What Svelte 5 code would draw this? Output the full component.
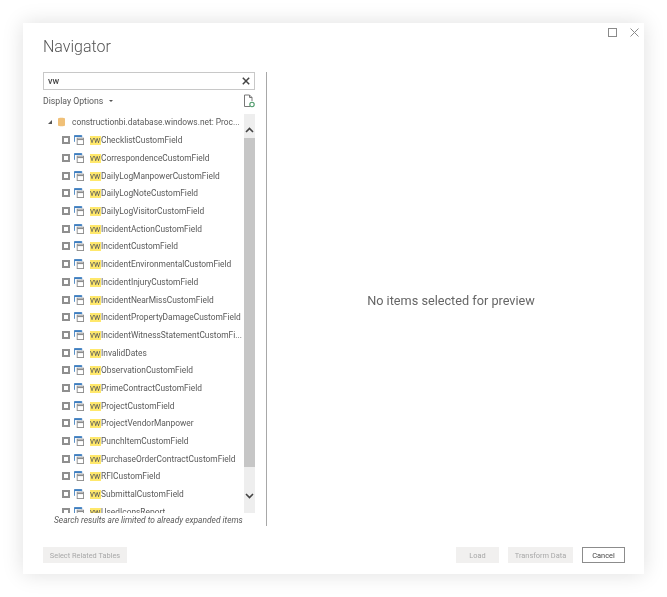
<script lang="ts">
  const tables = [
    'ChecklistCustomField',
    'CorrespondenceCustomField',
    'DailyLogManpowerCustomField',
    'DailyLogNoteCustomField',
    'DailyLogVisitorCustomField',
    'IncidentActionCustomField',
    'IncidentCustomField',
    'IncidentEnvironmentalCustomField',
    'IncidentInjuryCustomField',
    'IncidentNearMissCustomField',
    'IncidentPropertyDamageCustomField',
    'IncidentWitnessStatementCustomFi...',
    'InvalidDates',
    'ObservationCustomField',
    'PrimeContractCustomField',
    'ProjectCustomField',
    'ProjectVendorManpower',
    'PunchItemCustomField',
    'PurchaseOrderContractCustomField',
    'RFICustomField',
    'SubmittalCustomField',
    'UsedIconsReport'
  ];
</script>

<div class="page">
  <div class="dialog">
    <div class="window-controls">
      <svg width="9" height="9" viewBox="0 0 9 9"><rect x="0.5" y="0.5" width="8" height="8" fill="none" stroke="#8a8a8a" /></svg>
      <svg width="9" height="9" viewBox="0 0 9 9"><path d="M0.5 0.5 8.5 8.5M8.5 0.5 0.5 8.5" fill="none" stroke="#8a8a8a" /></svg>
    </div>

    <h1>Navigator</h1>

    <div class="body">
      <div class="left">
        <div class="search">
          <span>vw</span>
          <svg width="8" height="8" viewBox="0 0 8 8"><path d="M0.8 0.8 7.2 7.2M7.2 0.8 0.8 7.2" fill="none" stroke="#444" stroke-width="1.5" /></svg>
        </div>

        <div class="options">
          <span>Display Options</span>
          <span class="caret"></span>
          <svg class="refresh" width="12" height="14" viewBox="0 0 12 14">
            <path d="M7 12.5H1.5V1H6.5L9 3.5V7" fill="none" stroke="#777" />
            <path d="M6.5 1V3.5H9" fill="none" stroke="#777" />
            <circle cx="9" cy="10.5" r="2.2" fill="none" stroke="#4e9a6a" stroke-width="1.1" />
          </svg>
        </div>

        <div class="tree">
          <div class="items">
            <div class="server">
              <span class="expander"></span>
              <svg class="db" width="7" height="10" viewBox="0 0 7 10">
                <path d="M0 1.5C0 0.4 7 0.4 7 1.5V8.5C7 9.6 0 9.6 0 8.5Z" fill="#f0c078" />
              </svg>
              <span class="server-name">constructionbi.database.windows.net: Proc...</span>
            </div>
            {#each tables as name}
              <div class="row">
                <span class="check"></span>
                <svg class="table-icon" width="10" height="10" viewBox="0 0 11 11">
                  <path d="M0.5 7.5V0.5H8.5V2.5" fill="none" stroke="#3f7fc0" />
                  <path d="M0.5 1.5H8.5" stroke="#3f7fc0" stroke-width="1.5" />
                  <rect x="3.5" y="3.5" width="7" height="7" fill="#fff" stroke="#8c8c8c" />
                  <path d="M3.5 5H10.5" stroke="#8c8c8c" stroke-width="1.2" />
                </svg>
                <span class="label"><mark>vw</mark>{name}</span>
              </div>
            {/each}
          </div>

          <div class="scrollbar">
            <svg class="arrow" width="11" height="24" viewBox="0 0 11 24"><path d="M2 18 5.5 14.5 9 18" fill="none" stroke="#444" stroke-width="1.6" /></svg>
            <div class="thumb"></div>
            <svg class="arrow" width="11" height="46" viewBox="0 0 11 46"><path d="M2 27 5.5 30.5 9 27" fill="none" stroke="#444" stroke-width="1.6" /></svg>
          </div>
        </div>

        <p class="hint">Search results are limited to already expanded items</p>
      </div>

      <div class="preview">No items selected for preview</div>
    </div>

    <div class="footer">
      <button type="button" class="btn" disabled>Select Related Tables</button>
      <div class="spacer"></div>
      <button type="button" class="btn load" disabled>Load</button>
      <button type="button" class="btn transform" disabled>Transform Data</button>
      <button type="button" class="btn cancel">Cancel</button>
    </div>
  </div>
</div>

<style>
  :global(body) {
    margin: 0;
    background: #fff;
  }

  .page {
    width: 667px;
    height: 597px;
    box-sizing: border-box;
    padding: 23px;
    font-family: Roboto, 'Open Sans', sans-serif;
    color: #5a5a5a;
    overflow: hidden;
  }

  .dialog {
    position: relative;
    width: 621px;
    height: 551px;
    box-sizing: border-box;
    padding: 13px 20px 0 20px;
    display: flex;
    flex-direction: column;
    background: #fff;
    box-shadow: 0 0 20px rgba(0, 0, 0, 0.13);
    filter: blur(0.4px);
  }

  .window-controls {
    position: absolute;
    top: 5px;
    right: 5px;
    display: flex;
    gap: 13px;
  }

  h1 {
    margin: 0;
    font-size: 16px;
    line-height: 22px;
    font-weight: 300;
    color: #555;
  }

  .body {
    display: flex;
    margin-top: 14px;
    height: 454px;
  }

  .left {
    width: 212px;
    flex: none;
    display: flex;
    flex-direction: column;
  }

  .search {
    height: 18px;
    box-sizing: border-box;
    display: flex;
    align-items: center;
    justify-content: space-between;
    padding: 0 4px;
    border: 1px solid #c8c8c8;
    font-size: 9px;
    font-weight: 500;
    color: #444;
  }

  .options {
    display: flex;
    align-items: center;
    height: 14px;
    margin-top: 4px;
    font-size: 8.7px;
  }

  .caret {
    width: 0;
    height: 0;
    margin-left: 6px;
    border-left: 2px solid transparent;
    border-right: 2px solid transparent;
    border-top: 2px solid #555;
  }

  .refresh {
    margin-left: auto;
  }

  .tree {
    display: flex;
    height: 400px;
    margin-top: 6px;
    overflow: hidden;
  }

  .items {
    flex: 1;
    min-width: 0;
    overflow: hidden;
  }

  .server {
    display: flex;
    align-items: center;
    height: 18.5px;
    margin-top: -1px;
    padding-left: 5px;
    font-size: 8.4px;
    white-space: nowrap;
  }

  .expander {
    width: 0;
    height: 0;
    flex: none;
    margin-right: 6px;
    border-left: 4px solid transparent;
    border-bottom: 4px solid #555;
  }

  .db {
    flex: none;
  }

  .server-name {
    margin-left: 7px;
  }

  .row {
    display: flex;
    align-items: center;
    height: 17.7px;
    padding-left: 19px;
    font-size: 8.4px;
    white-space: nowrap;
  }

  .check {
    width: 8px;
    height: 8px;
    flex: none;
    box-sizing: border-box;
    border: 2px solid #8f8f8f;
  }

  .table-icon {
    flex: none;
    margin-left: 4px;
  }

  .label {
    margin-left: 6px;
  }

  mark {
    display: inline-block;
    line-height: 9px;
    padding-right: 0.7px;
    background: #ffe86b;
    color: inherit;
  }

  .scrollbar {
    width: 11px;
    flex: none;
    display: flex;
    flex-direction: column;
    background: #eeeeee;
  }

  .arrow {
    flex: none;
  }

  .thumb {
    flex: 1;
    background: #c6c6c6;
  }

  .hint {
    margin: 1px 0 0;
    padding-left: 11px;
    font-size: 8.4px;
    line-height: 12px;
    font-style: italic;
    white-space: nowrap;
  }

  .preview {
    flex: 1;
    height: 454px;
    display: flex;
    align-items: center;
    justify-content: center;
    margin-left: 11px;
    padding: 3px 0 0 11px;
    box-sizing: border-box;
    border-left: 1px solid #a8a8a8;
    font-size: 12.7px;
    color: #666;
  }

  .footer {
    display: flex;
    gap: 9px;
    margin-top: 21px;
    margin-right: -1px;
  }

  .spacer {
    flex: 1;
  }

  .btn {
    height: 16px;
    box-sizing: border-box;
    padding: 0;
    border: none;
    background: #f1f0ef;
    color: #a8a8a8;
    font-family: inherit;
    font-size: 7.4px;
    width: 84px;
  }

  .load {
    width: 43px;
  }

  .transform {
    width: 65px;
  }

  .cancel {
    width: 43px;
    background: #fff;
    border: 1px solid #8c8c8c;
    color: #444;
  }
</style>
